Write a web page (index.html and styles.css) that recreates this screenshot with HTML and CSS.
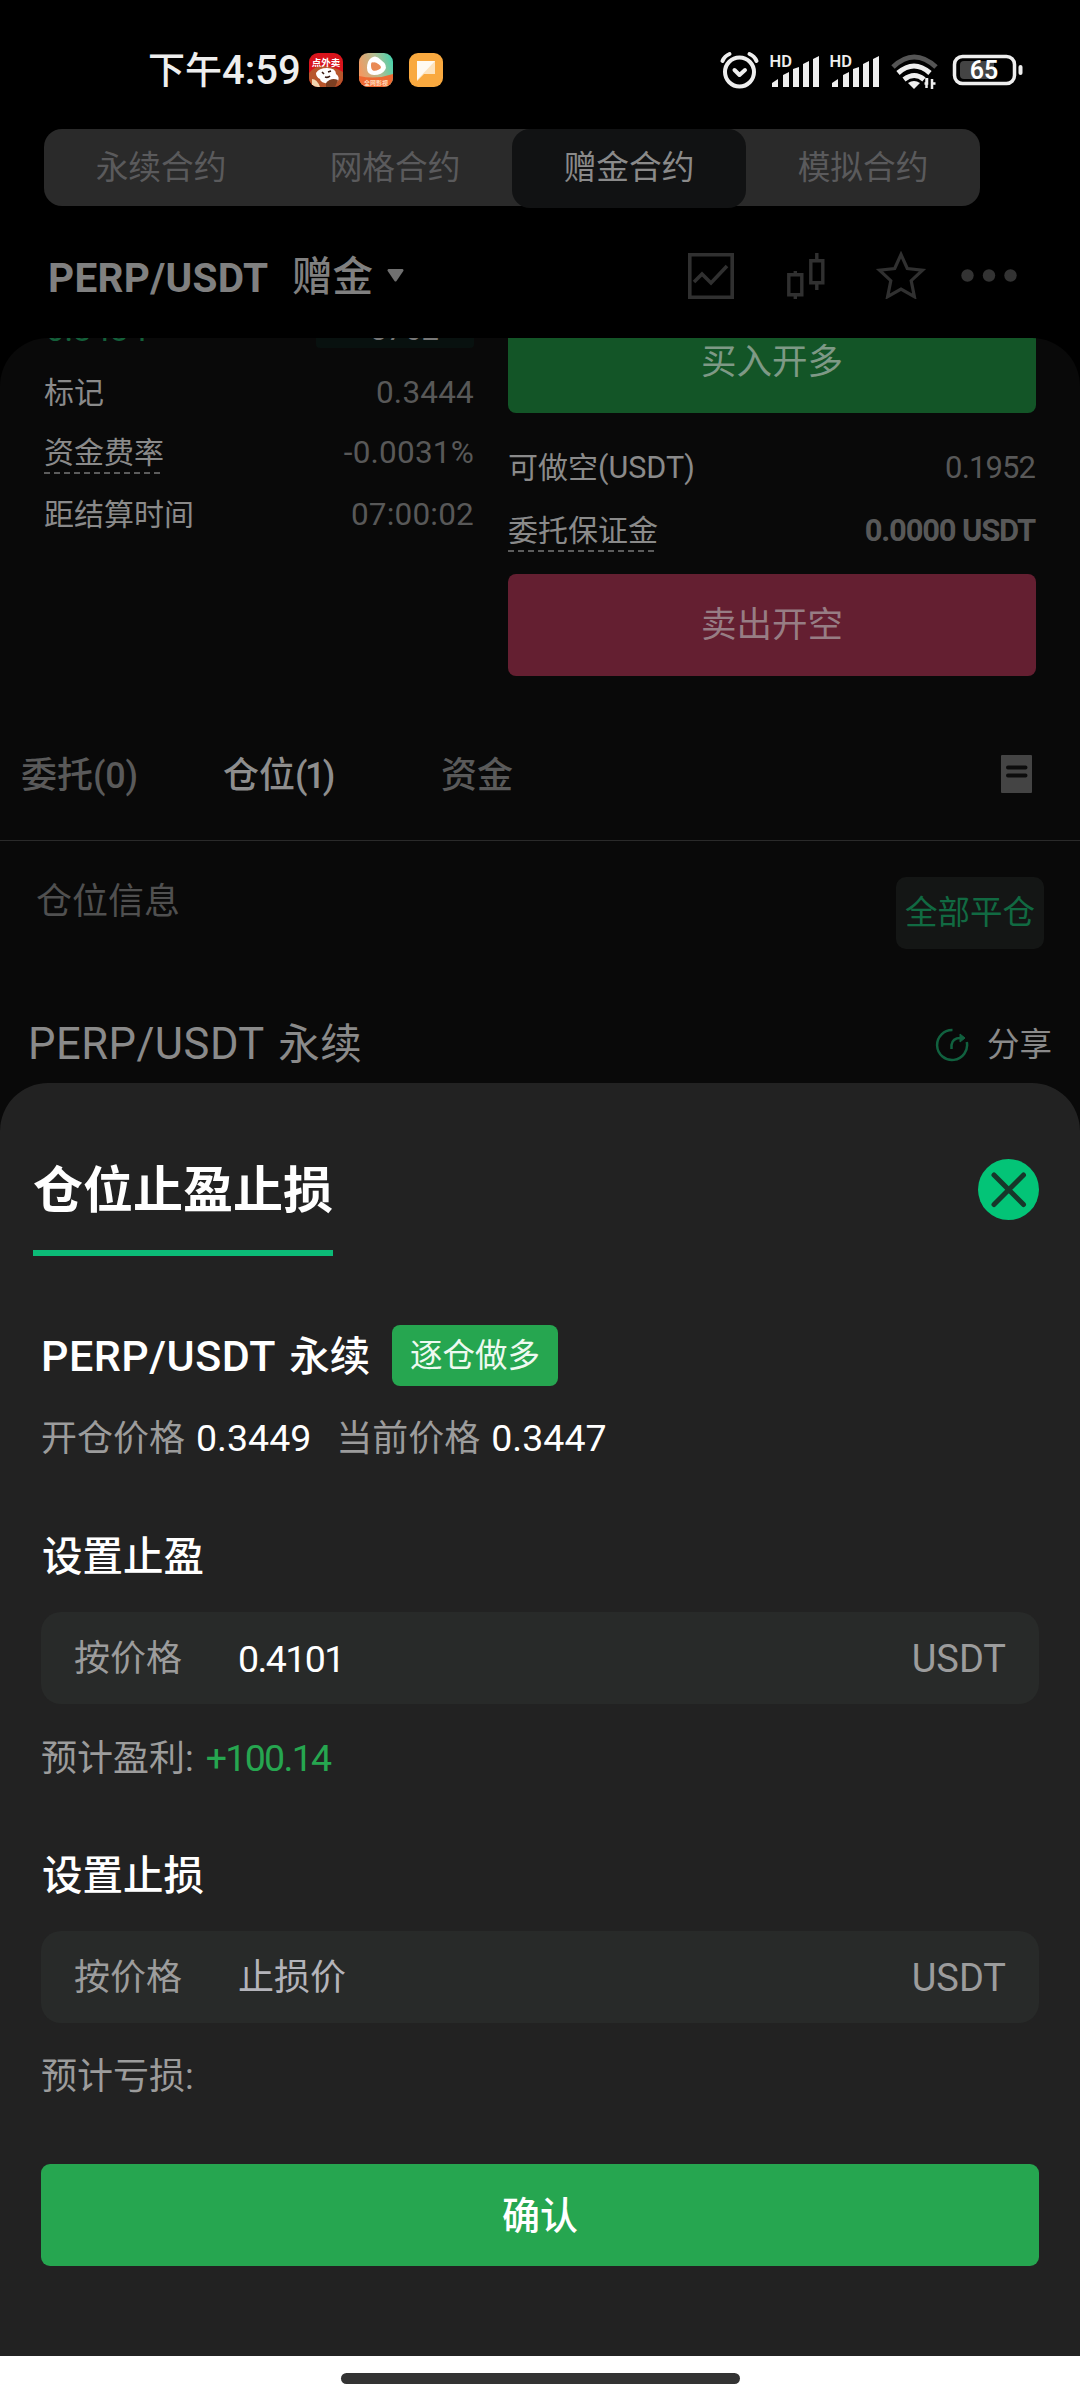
FILE: index.html
```html
<!DOCTYPE html>
<html lang="zh-CN">
<head>
<meta charset="utf-8">
<title>仓位止盈止损</title>
<link rel="stylesheet" href="styles.css">
</head>
<body>
<div class="app">
  <header class="top">
    <div class="status">
      <span class="clock">下午<span class="clock-num">4:59</span></span>
      <span class="app-icons">
        <svg width="34" height="34" viewBox="0 0 34 34">
          <defs><clipPath id="rc"><rect width="34" height="34" rx="9"/></clipPath></defs>
          <g clip-path="url(#rc)">
            <rect width="34" height="34" fill="#d9141c"/>
            <path d="M0 20q6-8 16-7t18 6v15H0z" fill="#b8562c"/>
            <path d="M7 20q3-5 11-5 9 0 9 6 4 3 2 7l-8 3q-10-1-10-5-4-2-4-6z" fill="#fff"/>
            <path d="M13 19l2 2M19 19l3-1M16 24q3 1 5-1" stroke="#3a1a12" stroke-width="1.600" fill="none"/>
            <path d="M17 30q5-6 12-3l-3 7h-9z" fill="#7c3f22"/>
            <path d="M3 26q5 0 8 8H3z" fill="#f2d5b0"/>
          </g>
          <text x="17" y="12.500" class="badge-text">点外卖</text>
        </svg>
        <svg width="34" height="34" viewBox="0 0 34 34">
          <defs>
            <clipPath id="vc"><rect width="34" height="34" rx="9"/></clipPath>
            <linearGradient id="vg" x1="0" y1=".4" x2="1" y2=".1"><stop offset="0" stop-color="#f09a62"/><stop offset=".5" stop-color="#b5bd92"/><stop offset="1" stop-color="#3fd3ae"/></linearGradient>
          </defs>
          <g clip-path="url(#vc)">
            <rect width="34" height="34" fill="url(#vg)"/>
            <path d="M0 23q17 4 34-2v13H0z" fill="#ef6a33"/>
            <path d="M12 5q5-4 10 2 7 5 4 10-3 5-11 5-7 0-7-7 0-7 4-10z" fill="#fff"/>
            <path d="M14 9.500q2-1 6 2t0 5-6 1-2-5 2-3z" fill="#e98a55"/>
          </g>
          <text x="17" y="32" class="badge-text badge-small">全网影视</text>
        </svg>
        <svg width="34" height="34" viewBox="0 0 34 34">
          <rect width="34" height="34" rx="9" fill="#f9a93f"/>
          <path d="M8 8h18v13H15l-7 7z" fill="#fde3bd"/>
          <path d="M8 8h18L8 27z" fill="#fffaf2"/>
        </svg>
      </span>
      <svg class="sys" width="310" height="40" viewBox="0 0 310 40">
        <g fill="none" stroke="#eee" stroke-width="4" stroke-linecap="round">
          <circle cx="21.500" cy="22" r="14.500"/>
          <path d="M4.500 11q2-5 7-7M38.500 11q-2-5-7-7"/>
          <path d="M16.500 20l5 5 5.500-5" stroke-linejoin="round"/>
        </g>
        <g fill="#eee">
          <g id="sig">
            <path d="M54 37v-4l6-4v8zM65 37V25l6-3v15zM75 37V19l6-2v20zM85 37V14l6-3v26zM95 37V9l6-3v31z"/>
            <text x="51.500" y="17" class="hd">HD</text>
          </g>
          <use href="#sig" x="60"/>
        </g>
        <g fill="none" stroke-width="5">
          <path d="M175 17q21-20 43 0" stroke="#555"/>
          <path d="M180 23q16-14 32 0M186 29.500q10.500-8 20 0" stroke="#eee"/>
        </g>
        <path d="M190 33q6-4 12 0l-6 6z" fill="#eee"/>
        <path d="M206.500 33.500h2.500V28M208.500 28v10M214 39V29M213.500 33.500h4" fill="none" stroke="#eee" stroke-width="2.500"/>
        <rect x="236.500" y="6.500" width="60" height="27" rx="8" fill="none" stroke="#eee" stroke-width="3.500"/>
        <path d="M242 15q0-4 4-4h30v18h-30q-4 0-4-4z" fill="#444"/>
        <rect x="300.500" y="15" width="4" height="10" rx="2" fill="#eee"/>
        <text x="266" y="29" class="batt">65</text>
      </svg>
    </div>
    <nav class="segment">
      <span>永续合约</span><span>网格合约</span><span class="on">赠金合约</span><span>模拟合约</span>
    </nav>
    <div class="pairbar">
      <span class="pair-code">PERP/USDT</span><span class="pair-kind">赠金</span>
      <svg class="caret" width="17" height="13" viewBox="0 0 17 13"><path d="M1.500 0h14q1.500.5.8 2L9.500 12q-1 1.200-2 0L.7 2q-.7-1.500.8-2z" fill="#707070"/></svg>
      <svg class="tools" width="332" height="48" viewBox="0 0 332 48" fill="none" stroke="#303030" stroke-width="3.600">
        <path d="M3.800 3.800h42.400v42.400H3.800zM8 31l8-8 9 9 16-17"/>
        <path d="M102.800 23.800h13v20h-13zM109.300 20v4M109.300 44v4M124.800 9.800h12v22h-12zM130.800 2v8M130.800 32v7" stroke-width="3.400"/>
        <path d="M215 3.500l6.300 14 15.200 1.700-11.300 10.500 3.200 16L215 38l-13.400 7.700 3.200-16L193.500 19.200l15.200-1.700z" stroke-width="3.200"/>
        <g fill="#333" stroke="none"><circle cx="281.500" cy="24.500" r="6.200"/><circle cx="303" cy="24.500" r="6.200"/><circle cx="324.500" cy="24.500" r="6.200"/></g>
      </svg>
    </div>
  </header>

  <section class="trade">
    <div class="book">
      <div class="line price"><span class="last">0.3434</span><span class="depth">5762</span></div>
      <div class="line"><span>标记</span><span class="val">0.3444</span></div>
      <div class="line"><span class="hint">资金费率</span><span class="val">-0.0031%</span></div>
      <div class="line late"><span>距结算时间</span><span class="val">07:00:02</span></div>
    </div>
    <div class="order">
      <div class="btn buy">买入开多</div>
      <div class="line"><span>可做空<span class="lat">(USDT)</span></span><span class="val narrow">0.1952</span></div>
      <div class="line tight"><span class="hint hint-long">委托保证金</span><span class="val strong">0.0000 USDT</span></div>
      <div class="btn sell">卖出开空</div>
    </div>
  </section>

  <nav class="tabs">
    <span>委托<span class="paren">(0)</span></span><span class="on">仓位<span class="paren paren-one">(1)</span></span><span>资金</span>
    <svg width="31" height="38" viewBox="0 0 31 38"><rect width="31" height="38" rx="1" fill="#444"/><path d="M7 12.500h17.500M7 20.500h17.500" stroke="#0c0c0c" stroke-width="4" stroke-linecap="round"/></svg>
  </nav>
  <div class="info"><span>仓位信息</span><span class="close-all">全部平仓</span></div>
  <div class="position">
    <span class="name">PERP/USDT <span class="cjk">永续</span></span>
    <svg width="34" height="34" viewBox="0 0 34 34" fill="none" stroke="#11613f" stroke-width="2.500"><path d="M17.500 2A15 15 0 1 0 31.800 14"/><path d="M16.500 21v-4q1-7 9-7h3"/><path d="M25 6l5 4-5 4z" fill="#11613f" stroke-width="1"/></svg>
    <span class="share">分享</span>
  </div>
</div>

<section class="sheet">
  <div class="sheet-head">
    <h1>仓位止盈止损</h1>
    <svg width="61" height="61" viewBox="0 0 61 61"><circle cx="30.500" cy="30.500" r="30.500" fill="#03c477"/><path d="M16 16l29.500 29.500M45.500 16L16 45.500" stroke="#17372a" stroke-width="5" stroke-linecap="round"/></svg>
  </div>
  <div class="pair"><span class="name">PERP/USDT <span class="cjk">永续</span></span><span class="tag">逐仓做多</span></div>
  <div class="prices"><span>开仓价格</span><b>0.3449</b><span class="cur">当前价格</span><b>0.3447</b></div>

  <h2>设置止盈</h2>
  <div class="field"><span class="by">按价格</span><span class="amount">0.4101</span><span class="unit">USDT</span></div>
  <div class="est">预计盈利:<span class="gain">+100.14</span></div>

  <h2>设置止损</h2>
  <div class="field"><span class="by">按价格</span><span class="ph">止损价</span><span class="unit">USDT</span></div>
  <div class="est">预计亏损:</div>

  <div class="confirm">确认</div>
</section>
<footer class="gesture"><i></i></footer>
</body>
</html>
```
FILE: styles.css
```css
* { box-sizing: border-box; }
body {
  margin: 0;
  width: 1080px;
  height: 2400px;
  background: #090909;
  font-family: Roboto, "Noto Sans CJK SC", sans-serif;
  color: #8a8a8a;
  white-space: nowrap;
  overflow: hidden;
}
svg { display: block; flex: none; }

.app { height: 1083px; background: linear-gradient(#000 0 400px, #090909 400px); }
.top { height: 338px; }

.status { display: flex; align-items: center; height: 129px; padding: 11px 50px 0 148px; }
.clock { width: 161px; padding-top: 2px; font-size: 37px; line-height: 60px; font-weight: 500; color: #eee; }
.clock-num { font-size: 40px; }
.app-icons { display: flex; gap: 16px; }
.badge-text { font-size: 9.5px; font-weight: 700; fill: #fff; text-anchor: middle; }
.badge-small { font-size: 6px; fill: #ffd9b8; }
.sys { margin-left: auto; margin-right: 2px; }
.hd { font-size: 16.5px; font-weight: 600; }
.batt { font-size: 25px; font-weight: 600; fill: #fff; text-anchor: middle; }

.segment {
  display: grid;
  grid-template-columns: repeat(4, 1fr);
  width: 936px;
  height: 77px;
  margin-left: 44px;
  border-radius: 18px;
  background: #2a2a2a;
  color: #5a5a5c;
  font-size: 32.7px;
  line-height: 79px;
  text-align: center;
}
.segment .on { background: #111213; color: #8a8a8a; border-radius: 18px; }

.pairbar { display: flex; align-items: center; height: 132px; padding: 6px 62px 0 48px; line-height: 60px; }
.pair-code { width: 244px; padding-top: 5px; font-size: 40.5px; font-weight: 700; letter-spacing: .3px; color: #808080; }
.pair-kind { padding-top: 3px; font-size: 40.5px; font-weight: 500; color: #808080; }
.caret { margin-left: 14px; }
.tools { margin-left: auto; }

.trade {
  display: grid;
  grid-template-columns: 430px 528px;
  column-gap: 34px;
  height: 370px;
  padding: 0 44px;
  border-radius: 48px 48px 0 0;
  background: #090909;
  overflow: hidden;
}
.book, .order { margin-top: -30px; }
.line { display: flex; justify-content: space-between; height: 60px; line-height: 62px; font-size: 30px; }
.late { margin-top: 2px; }
.tight { margin-top: 3px; }
.price { height: 40px; line-height: 43px; margin-bottom: 14px; }
.last { padding-left: 2px; font-size: 33px; color: #14603a; }
.depth { width: 158px; padding-right: 35px; text-align: right; background: #08110f; border-radius: 4px; font-size: 31px; color: #777; }
.val { font-size: 31.5px; letter-spacing: .2px; color: #585858; }
.narrow { font-size: 31px; letter-spacing: -.9px; padding-right: 1px; }
.strong { font-size: 31px; font-weight: 700; letter-spacing: -1.2px; padding-right: 1px; }
.lat { font-size: 30.5px; }
.hint {
  height: 53px;
  background: repeating-linear-gradient(90deg, #5c5c5c 0 6px, transparent 6px 10px) 0 50px / 116px 2px no-repeat;
}
.hint-long { background-size: 146px 2px; }
.btn { height: 102px; border-radius: 8px; font-size: 35.5px; line-height: 103px; text-align: center; }
.buy { margin: 3px 0 24px; background: #135527; color: #7e9986; }
.sell { margin-top: 14px; background: #641f31; color: #977d84; }

.tabs {
  display: flex;
  align-items: center;
  height: 133px;
  padding: 0 48px 0 21px;
  border-bottom: 1px solid #2a2a2a;
  font-size: 36px;
  font-weight: 500;
  line-height: 60px;
  color: #5a5a5a;
}
.tabs > span { width: 202px; padding-top: 3px; }
.tabs > span + span { width: 218px; }
.tabs .on { color: #8e8e8e; }
.tabs svg { margin-left: auto; }
.paren { letter-spacing: -.2px; }
.paren-one { letter-spacing: -2.6px; }

.info { display: flex; justify-content: space-between; margin-top: 36px; height: 72px; padding: 0 36px 0 36px; font-size: 36px; line-height: 51px; color: #505050; }
.close-all { width: 148px; border-radius: 10px; background: #141615; color: #116a42; font-size: 32.5px; line-height: 73px; text-align: center; }

.position { display: flex; align-items: center; height: 134px; padding: 57px 28px 0 28px; color: #8a8a8a; }
.name { font-size: 43.5px; line-height: 60px; letter-spacing: .5px; }
.cjk { margin-left: 3px; font-size: 41.5px; letter-spacing: .5px; }
.position svg { margin-left: auto; }
.share { margin-left: 18px; font-size: 32.5px; line-height: 60px; }

.sheet { height: 1273px; padding: 56px 41px 0; border-radius: 48px 48px 0 0; background: #222; color: #9c9c9c; }
.sheet-head { display: flex; justify-content: space-between; height: 117px; margin-left: -8px; }
.sheet-head h1 { margin: 0; height: 117px; border-bottom: 6px solid #0cbb77; color: #fff; font-size: 50px; line-height: 104px; font-weight: 700; }
.sheet-head svg { margin-top: 20px; }
.pair { display: flex; height: 61px; margin-top: 69px; }
.pair .name { width: 351px; color: #fff; font-weight: 500; font-size: 43px; line-height: 63px; }
.pair .cjk { font-size: 40.5px; letter-spacing: 0; }
.tag { width: 166px; border-radius: 8px; background: #26a650; color: #eefaf0; font-size: 32.5px; line-height: 63px; text-align: center; }
.prices { display: flex; margin-top: 22px; height: 60px; font-size: 36px; line-height: 63px; }
.prices b { margin-left: 11px; font-size: 37.5px; font-weight: 400; line-height: 61px; color: #fff; }
.prices .cur { margin-left: 25px; }
.sheet h2 { margin: 58px 0 26px; height: 60px; padding-left: 1px; color: #fff; font-size: 40.5px; font-weight: 500; line-height: 63px; }
.field { display: flex; align-items: center; height: 92px; padding: 2px 33px 0; border-radius: 20px; background: #282a29; font-size: 36px; line-height: 60px; }
.field .by { width: 164px; }
.field .amount { font-size: 37.5px; letter-spacing: -1.6px; color: #fff; }
.field .ph { color: #b4b4ba; }
.unit { margin-left: auto; font-size: 38px; }
.est { margin-top: 23px; height: 60px; font-size: 36px; line-height: 62px; }
.gain { margin-left: 12px; font-size: 37.5px; letter-spacing: -1.7px; color: #26a650; }
.confirm { height: 102px; margin-top: 58px; border-radius: 9px; background: #26a650; color: #fff; font-size: 38px; font-weight: 500; line-height: 104px; text-align: center; }

.gesture { display: flex; justify-content: center; height: 44px; padding-top: 17px; background: #fff; }
.gesture i { width: 399px; height: 11px; border-radius: 6px; background: #333; }
```
